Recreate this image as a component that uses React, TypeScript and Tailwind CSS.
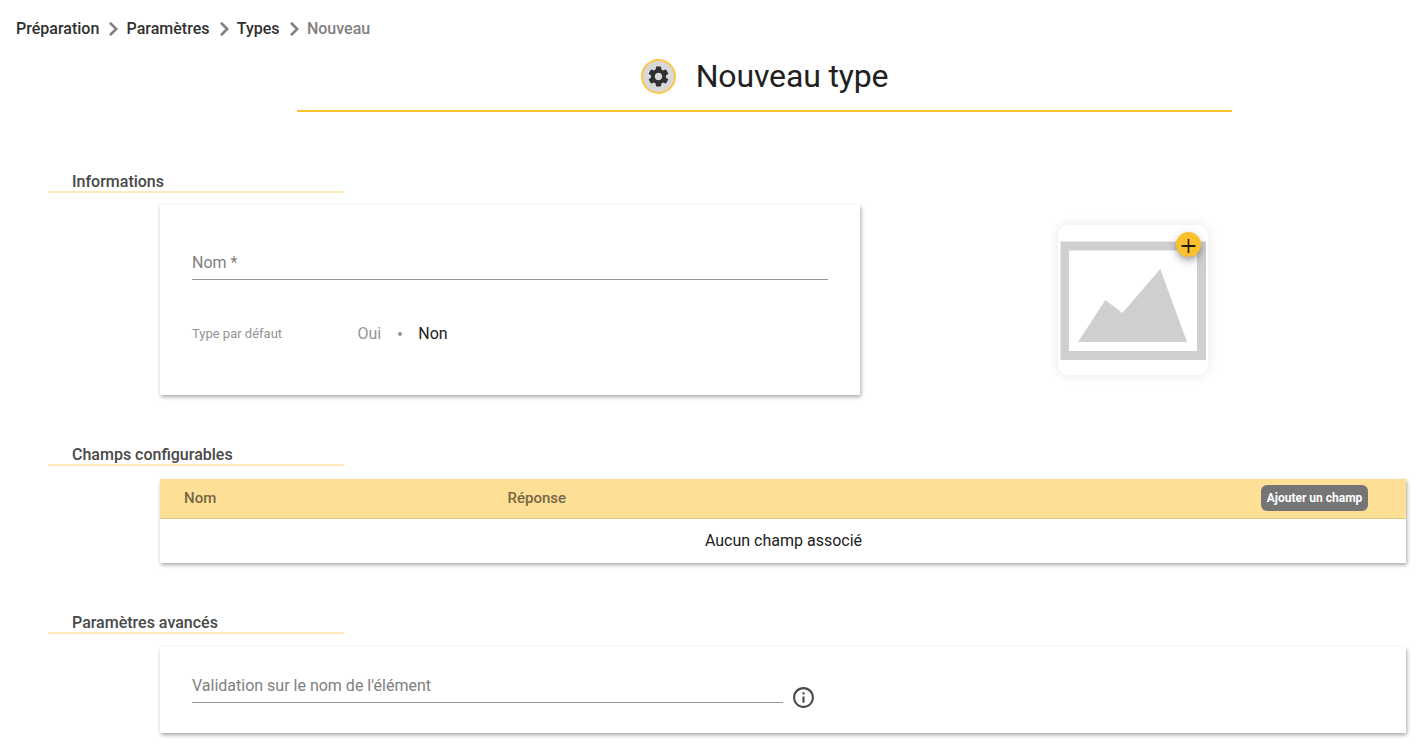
import React from "react";
import { MdOutlineInfo, MdSettings } from "react-icons/md";

const CARD_SHADOW = "shadow-[1px_2px_4px_0_rgba(0,0,0,0.35)]";

const Chevron = () => (
  <svg className="mt-px mr-[8.3px] ml-[10px] h-[14px] w-[9px] text-[#808080]" viewBox="8.59 6 7.41 12" fill="currentColor">
    <path d="M10 6L8.59 7.41 13.17 12l-4.58 4.59L10 18l6-6z" stroke="currentColor" strokeWidth="0.3" />
  </svg>
);

const SectionTitle = ({ children }: { children: React.ReactNode }) => (
  <h2 className="ml-12 h-6 w-[296px] border-b-2 border-[#fdebbd] pl-6 text-base leading-[25px] font-medium text-[#484848]">
    {children}
  </h2>
);

const PicturePlaceholder = () => (
  <div className="relative mt-5 h-[150px] w-[150px] rounded-[10px] bg-white shadow-[0_0_12px_rgba(0,0,0,0.1)]">
    <svg className="h-[150px] w-[150px]" viewBox="0 0 150 150">
      <path d="M2.5 16.5H148V135H2.5ZM11 25.5V126H139V25.5Z" fill="#cfcfcf" fillRule="evenodd" />
      <path d="M20 117L47.4 75 64.3 88 102.3 44 129 117Z" fill="#cfcfcf" />
    </svg>
    <button className="absolute top-[7px] left-[118px] flex h-[25px] w-[25px] items-center justify-center rounded-full bg-[#fbc02d] shadow-[0_3px_5px_-1px_rgba(0,0,0,0.2),0_6px_10px_0_rgba(0,0,0,0.14),0_1px_8px_0_rgba(0,0,0,0.12)]">
      <svg className="mt-[3px] h-[15px] w-[15px]" viewBox="0 0 15 15">
        <path d="M.5 6H14.5V8H.5ZM6.7 0H8.3V14H6.7Z" fill="#1f1a0a" />
      </svg>
    </button>
  </div>
);

const App: React.FC = () => {
  return (
    <div className="h-[746px] w-full overflow-hidden bg-white font-[Roboto,sans-serif] text-[#212121]">
      {/* Breadcrumb */}
      <nav className="flex h-14 items-center pt-px pl-4 text-base font-medium text-[#303030]">
        <span>Préparation</span>
        <Chevron />
        <span>Paramètres</span>
        <Chevron />
        <span>Types</span>
        <Chevron />
        <span className="text-[#808080]">Nouveau</span>
      </nav>

      {/* Page title */}
      <header className="ml-[297px] flex h-14 w-[935px] items-start justify-center border-b-2 border-[#fbc02d] pt-[3px]">
        <div className="flex h-[35px] w-[35px] items-center justify-center rounded-full border-2 border-[#fbc84a] bg-[#d8d8d8]">
          <MdSettings className="h-[25px] w-[25px] text-[#303030]" />
        </div>
        <h1 className="ml-5 text-[32px] leading-[35px] font-normal tracking-[-0.15px]">Nouveau type</h1>
      </header>

      <section className="mt-[57px]">
        <SectionTitle>Informations</SectionTitle>
        <div className="mt-3 flex">
          <div className={`ml-40 h-[190px] w-[700px] px-8 pt-[45px] ${CARD_SHADOW}`}>
            <div className="h-[30px] border-b border-[#949494] pt-px text-base text-[#808080]">Nom *</div>
            <div className="mt-[42px] flex h-6 items-center text-base text-[#949494]">
              <span className="w-[165.5px] text-[13px]">Type par défaut</span>
              <span>Oui</span>
              <span className="mr-4 mb-px ml-[17px] h-1 w-1 rounded-full bg-[#949494]" />
              <span className="text-[#212121]">Non</span>
            </div>
          </div>
          <div className="ml-[198px]">
            <PicturePlaceholder />
          </div>
        </div>
      </section>

      <section className="mt-[47px]">
        <SectionTitle>Champs configurables</SectionTitle>
        <div className={`mt-[13px] mr-3 ml-40 h-[84px] ${CARD_SHADOW}`}>
          <div className="flex h-10 items-center border-b border-[#dcc585] bg-[#fddf96] pr-[38px] pb-px pl-6 text-[15px] font-medium text-[#766845]">
            <span className="w-[323.5px]">Nom</span>
            <span className="flex-1">Réponse</span>
            <button className="h-[26px] w-[107px] rounded-md bg-[#757575] text-xs font-bold whitespace-nowrap text-white">
              Ajouter un champ
            </button>
          </div>
          <p className="pl-px text-center text-base leading-[43px]">Aucun champ associé</p>
        </div>
      </section>

      <section className="mt-[47px]">
        <SectionTitle>Paramètres avancés</SectionTitle>
        <div className={`mt-[13px] mr-3 ml-40 flex h-[86px] px-8 pt-[26px] ${CARD_SHADOW}`}>
          <div className="h-[30px] w-[591px] border-b border-[#949494] pt-px text-base text-[#808080]">
            Validation sur le nom de l'élément
          </div>
          <MdOutlineInfo className="mt-3 ml-2 h-[25px] w-[25px] text-[#484848]" />
        </div>
      </section>
    </div>
  );
};

export default App;
